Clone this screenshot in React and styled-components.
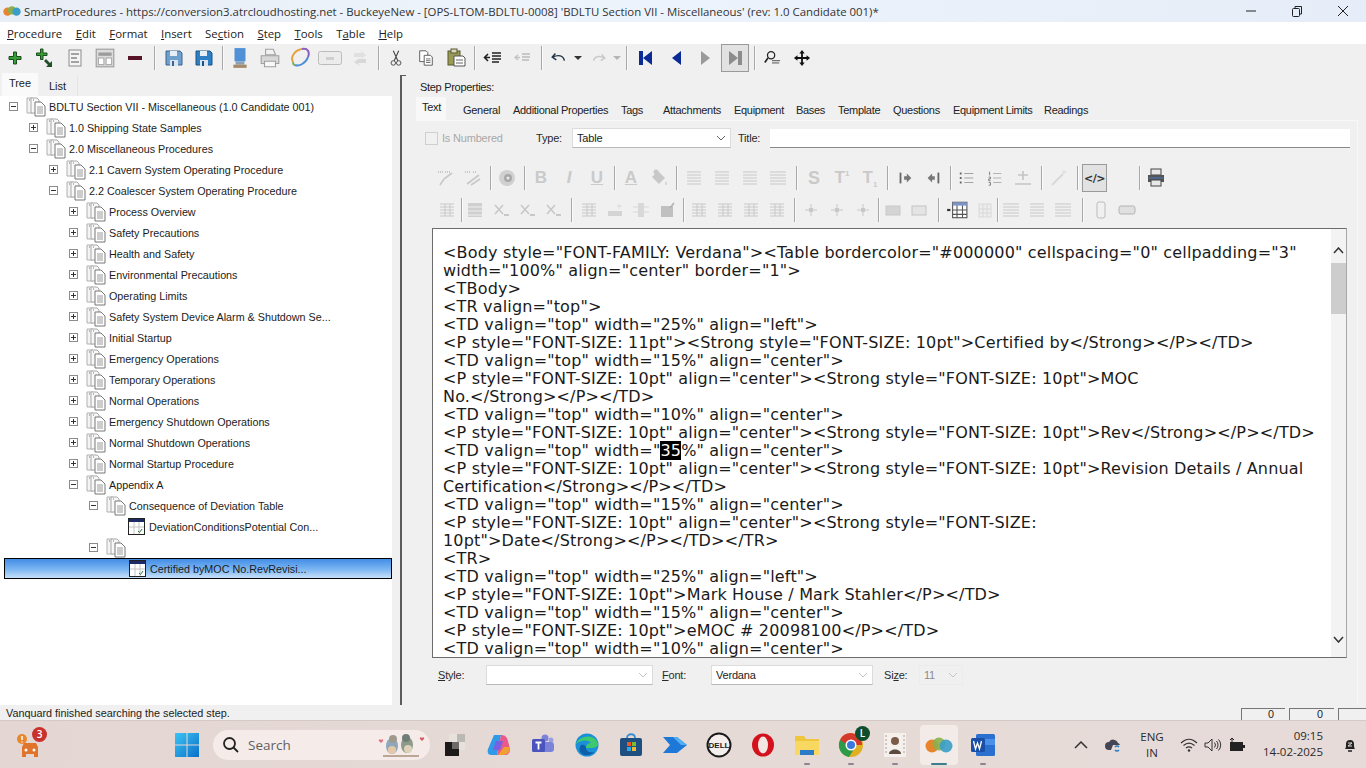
import React from 'react'
import styled, { createGlobalStyle } from 'styled-components'

const GlobalStyle = createGlobalStyle`
    html, body {
        margin: 0;
        padding: 0;
        background: #f0f0f0;
    }
    * {
        box-sizing: border-box;
    }
`

const Screen = styled.div`
    width: 1366px;
    height: 768px;
    overflow: hidden;
    display: flex;
    flex-direction: column;
    font-family: "Open Sans", "Liberation Sans", sans-serif;
    color: #222;
`

const TitleBar = styled.div`
    height: 22px;
    flex: none;
    display: flex;
    align-items: center;
    background: linear-gradient(90deg, #e9eef6, #eef4fc 40%, #e6edf8);
    padding-left: 3px;
    font-size: 11.4px;
    color: #333;
`

const TitleText = styled.span`
    margin-left: 3px;
    flex: 1;
    white-space: nowrap;
`

const WinButton = styled.div`
    width: 46px;
    height: 22px;
    display: flex;
    align-items: center;
    justify-content: center;
`

const MenuBar = styled.div`
    height: 22px;
    flex: none;
    display: flex;
    align-items: center;
    gap: 13.4px;
    padding-left: 7px;
    background: #fff;
    font-size: 11.4px;
    color: #222;
    u {
        text-underline-offset: 1px;
    }
`

const MainToolbar = styled.div`
    height: 28px;
    flex: none;
    display: flex;
    align-items: center;
    background: #f0f0f0;
`

const Slot = styled.div`
    width: ${p => p.$w}px;
    height: ${p => p.$h || 24}px;
    flex: none;
    display: flex;
    align-items: center;
    justify-content: center;
    color: ${p => (p.$off ? '#c8c8c8' : '#3a3a3a')};
    ${p => p.$boxed && `
        background: #e2e2e2;
        border: 1px solid #9a9a9a;
    `}
`

const Sep = styled.div`
    width: ${p => p.$w}px;
    flex: none;
    height: 24px;
    display: flex;
    justify-content: center;
    &::after {
        content: '';
        width: 1px;
        height: 100%;
        background: #a8a8a8;
        box-shadow: 1px 0 0 #fafafa;
    }
`

const Body = styled.div`
    flex: 1;
    min-height: 0;
    display: flex;
`

const LeftPanel = styled.div`
    width: 396px;
    flex: none;
    display: flex;
    flex-direction: column;
`

const TreeTabs = styled.div`
    height: 24px;
    flex: none;
    display: flex;
    align-items: flex-end;
    padding-left: 2px;
`

const TreeTab = styled.div`
    width: ${p => (p.$on ? 36 : 40)}px;
    height: ${p => (p.$on ? 23 : 20)}px;
    display: flex;
    align-items: center;
    justify-content: center;
    font-family: "Liberation Sans", sans-serif;
    font-size: 11px;
    color: #222;
    background: ${p => (p.$on ? '#fafafa' : '#f0f0f0')};
    ${p => !p.$on && 'border-right: 1px solid #e4e4e4;'}
    ${p => p.$on && 'padding-bottom: 3px;'}
`

const Tree = styled.div`
    flex: 1;
    width: 392px;
    background: #fff;
`

const TreeRow = styled.div`
    height: 21px;
    display: flex;
    align-items: center;
    padding-left: ${p => 9 + p.$depth * 20}px;
    margin-left: ${p => (p.$sel ? 4 : 0)}px;
    font-family: "Liberation Sans", sans-serif;
    font-size: 10.75px;
    color: #1c1c1c;
    white-space: nowrap;
    ${p => p.$sel && `
        padding-left: ${6 + p.$depth * 20}px;
        background: linear-gradient(180deg, #3d8ae6, #7db6f2 55%, #cfe5fb);
        outline: 1px solid #000;
        outline-offset: -1px;
    `}
`

const Expander = styled.span`
    width: 9px;
    height: 9px;
    flex: none;
    display: flex;
    align-items: center;
    justify-content: center;
    position: relative;
    ${p => p.$kind && 'border: 1px solid #8c8c8c; background: #fff;'}
    &::before {
        content: '';
        display: ${p => (p.$kind ? 'block' : 'none')};
        width: 5px;
        height: 1px;
        background: #333;
    }
    &::after {
        content: '';
        display: ${p => (p.$kind === 'plus' ? 'block' : 'none')};
        position: absolute;
        width: 1px;
        height: 5px;
        left: 3px;
        top: 1px;
        background: #333;
    }
`

const TreeIcon = styled.span`
    width: 20px;
    height: 20px;
    margin: 0 3px 0 8px;
    flex: none;
    display: flex;
    align-items: center;
    justify-content: center;
`

const Splitter = styled.div`
    width: 8px;
    flex: none;
    padding: 3px 0 0 4px;
    &::before {
        content: '';
        display: block;
        width: 6px;
        height: 1px;
        background: #5c5c5c;
    }
    &::after {
        content: '';
        display: block;
        width: 2px;
        height: calc(100% - 1px);
        background: #5c5c5c;
    }
`

const RightPanel = styled.div`
    flex: 1;
    min-width: 0;
    padding: 8px 8px 0 11px;
    display: flex;
    flex-direction: column;
`

const PanelLabel = styled.div`
    height: 14px;
    line-height: 14px;
    font-family: "Liberation Sans", sans-serif;
    font-size: 11px;
    letter-spacing: -.3px;
    margin: 0 0 5px 5px;
`

const TabRow = styled.div`
    height: 21px;
    flex: none;
    display: flex;
    align-items: flex-end;
    padding-left: 1px;
`

const Tab = styled.div`
    width: ${p => p.$w}px;
    height: ${p => (p.$on ? 23 : 20)}px;
    margin-left: ${p => p.$ml || 0}px;
    flex: none;
    display: flex;
    align-items: center;
    font-family: "Liberation Sans", sans-serif;
    font-size: 11px;
    letter-spacing: -.3px;
    white-space: nowrap;
    color: #222;
    ${p => p.$on && 'background: #f8f8f8; padding: 0 0 4px 6px; margin-top: -2px;'}
`

const TabBody = styled.div`
    flex: 1;
    padding: 7px 7px 0 10px;
    border-top: 1px solid #f8f8f8;
    border-right: 1px solid #f8f8f8;
`

const PropRow = styled.div`
    height: 20px;
    display: flex;
    align-items: center;
    font-family: "Liberation Sans", sans-serif;
    font-size: 11px;
    letter-spacing: -.2px;
    color: #222;
`

const CheckBox = styled.span`
    width: 13px;
    height: 13px;
    border: 1px solid #cfcfcf;
    background: #f0f0f0;
    flex: none;
`

const FieldLabel = styled.span`
    width: ${p => p.$w}px;
    margin-left: ${p => p.$ml || 0}px;
    flex: none;
    color: ${p => (p.$off ? '#a8a8a8' : '#2a2a2a')};
    white-space: nowrap;
    u {
        text-underline-offset: 1px;
    }
`

const Select = styled.div`
    width: ${p => p.$w}px;
    height: 20px;
    flex: none;
    display: flex;
    align-items: center;
    justify-content: space-between;
    padding: 0 4px 0 4px;
    background: ${p => (p.$off ? '#f0f0f0' : '#fff')};
    border: 1px solid ${p => (p.$off ? '#ececec' : '#dcdcdc')};
    border-bottom-color: ${p => (p.$off ? '#ececec' : '#b8b8b8')};
    color: ${p => (p.$off ? '#8a8a8a' : '#222')};
`

const TitleInput = styled.div`
    flex: 1;
    height: 19px;
    margin-left: 6px;
    background: #fff;
    border-bottom: 1px solid #8a8a8a;
`

const FormatRow = styled.div`
    height: 28px;
    display: flex;
    align-items: center;
    margin-top: ${p => p.$mt}px;
    padding-left: ${p => p.$pl}px;
`

const Letter = styled.span`
    font-family: "Liberation Sans", sans-serif;
    font-size: ${p => p.$size || 17}px;
    font-weight: 700;
    font-style: ${p => (p.$italic ? 'italic' : 'normal')};
    text-decoration: ${p => (p.$under ? 'underline' : 'none')};
    color: #cacaca;
    sup, sub {
        font-size: 8px;
        line-height: 0;
    }
`

const CodeTag = styled.span`
    font-family: "DejaVu Sans", sans-serif;
    font-size: 11px;
    font-weight: 700;
    color: #333;
    letter-spacing: -.5px;
`

const Editor = styled.div`
    height: 430px;
    margin: 4px 3px 0 7px;
    display: flex;
    background: #fff;
    border: 1px solid #6c6c6c;
    border-right-color: #a8a8a8;
    overflow: hidden;
`

const CodeArea = styled.div`
    flex: 1;
    min-width: 0;
    overflow: hidden;
    padding: 15px 0 0 10px;
    font-family: "DejaVu Sans", Verdana, sans-serif;
    font-size: 16px;
    letter-spacing: .17px;
    line-height: 18px;
    color: #1a1a1a;
    white-space: pre;
`

const Hilite = styled.span`
    background: #000;
    color: #fff;
`

const ScrollBar = styled.div`
    width: 15px;
    flex: none;
    display: flex;
    flex-direction: column;
    align-items: center;
    background: #f3f3f3;
`

const ScrollButton = styled.div`
    height: 34px;
    width: 100%;
    flex: ${p => (p.$end ? 1 : 'none')};
    display: flex;
    align-items: ${p => (p.$end ? 'flex-end' : 'center')};
    justify-content: center;
    padding: ${p => (p.$end ? '0 0 14px' : '8px 0 0')};
`

const ScrollThumb = styled.div`
    width: 100%;
    height: 51px;
    flex: none;
    background: #cdcdcd;
`

const BottomRow = styled(PropRow)`
    margin-top: 7px;
    padding-left: 13px;
`

const StatusBar = styled.div`
    height: 15px;
    flex: none;
    display: flex;
    align-items: flex-start;
    overflow: hidden;
    font-family: "Liberation Sans", sans-serif;
    font-size: 10.8px;
    color: #1c1c1c;
`

const StatusText = styled.div`
    flex: 1;
    padding-left: 6px;
    line-height: 16px;
`

const StatusPane = styled.div`
    width: ${p => p.$w}px;
    height: 12px;
    margin: 3px 4px 0 0;
    padding-right: 11px;
    flex: none;
    border-left: 1px solid #777;
    border-top: 1px solid #777;
    text-align: right;
    line-height: 10px;
    overflow: hidden;
    &:last-child {
        margin-right: 0;
    }
`

const Taskbar = styled.div`
    height: 48px;
    flex: none;
    display: flex;
    align-items: center;
    background: linear-gradient(90deg, #e4d7d3, #e6dad6 50%, #e6dbd9);
    border-top: 1px solid #d4c9c6;
    padding-left: 8px;
`

const TaskSlot = styled.div`
    width: ${p => (p.$active ? 38 : 44)}px;
    margin: 0 ${p => (p.$active ? 3 : 0)}px;
    height: 40px;
    flex: none;
    display: flex;
    align-items: center;
    justify-content: center;
    position: relative;
    border-radius: 4px;
    ${p => p.$active && 'background: #f2ebe8;'}
    ${p => p.$run && `
        &::after {
            content: '';
            position: absolute;
            bottom: 0;
            left: ${p.$active ? 11 : 19}px;
            width: ${p.$active ? 16 : 6}px;
            height: 2px;
            border-radius: 1px;
            background: ${p.$active ? '#3d7f8f' : '#8d8592'};
        }
    `}
`

const Badge = styled.span`
    position: absolute;
    top: ${p => p.$top}px;
    right: ${p => p.$right}px;
    width: 15px;
    height: 15px;
    border-radius: 50%;
    display: flex;
    align-items: center;
    justify-content: center;
    background: ${p => p.$bg};
    color: #fff;
    font-size: 10px;
    font-weight: 600;
`

const LeftGap = styled.div`
    width: 113px;
    flex: none;
`

const SearchPill = styled.div`
    width: 217px;
    height: 30px;
    margin: 0 3px 0 4px;
    flex: none;
    display: flex;
    align-items: center;
    padding: 0 2px 0 9px;
    border-radius: 15px;
    background: #f5ece9;
    font-size: 13.5px;
    color: #5f5f5f;
`

const SearchLabel = styled.span`
    flex: 1;
    margin-left: 8px;
`

const Tray = styled.div`
    margin-left: auto;
    display: flex;
    align-items: center;
    padding-right: 4px;
    color: #2a2a2a;
`

const TrayIcon = styled.div`
    width: 24px;
    height: 24px;
    flex: none;
    margin-right: ${p => p.$mr || 0}px;
    display: flex;
    align-items: center;
    justify-content: center;
`

const LangBlock = styled.div`
    width: 40px;
    margin-right: 5px;
    flex: none;
    text-align: center;
    font-size: 11.5px;
    line-height: 16px;
`

const Clock = styled.div`
    margin: -2px 15px 0 14px;
    text-align: right;
    font-size: 11.5px;
    line-height: 16px;
    white-space: nowrap;
`

const Svg = ({ s = 20, children }) => <svg width={s} height={s} viewBox="0 0 20 20" fill="none">{children}</svg>

const gLines = (x, y, w, n, step = 3) => Array.from({ length: n }, (_, i) => <path key={i} d={`M${x} ${y + i * step}h${w}`} stroke="currentColor" />)

const Floppy = ({ c, d }) => <Svg>
    <path d="M2 3h14l2 2v12H2z" fill={c} stroke={d} />
    <rect x="6" y="3" width="7" height="5" fill="#e8eef6" />
    <path d="M6 18v-6h8v6" fill="#dbe5f2" />
    <rect x="8" y="13" width="2" height="5" fill={d} />
</Svg>

const Arrow = ({ c, dir, bar }) => <Svg>
    {bar === 'l' && <rect x="3" y="3" width="4" height="14" fill={c} />}
    {bar === 'r' && <rect x="13" y="3" width="4" height="14" fill={c} />}
    {dir === 'l' ? <path d="M15 3v14l-9-7z" fill={c} transform={bar ? 'translate(1 0)' : ''} /> : <path d="M5 3v14l9-7z" fill={c} transform={bar ? 'translate(-1 0)' : ''} />}
</Svg>

const icons = {
    plus: <Svg><path d="M8.500 4h3v4.500H16v3h-4.500V16h-3v-4.500H4v-3h4.500z" fill="#35a035" stroke="#1d4d1d" /></Svg>,
    plusDown: <Svg><path d="M5.500 1h2.500v4h4v2.500H8v4H5.500v-4h-4V5h4z" fill="#35a035" stroke="#1d4d1d" /><path d="M11 11l4 4 2-2v6h-6l2-2-4-4z" fill="#23502a" /></Svg>,
    list: <Svg><rect x="4" y="2" width="12" height="16" fill="#f4f4f4" stroke="#8c8c8c" /><path d="M6 6h8M6 10h6M6 14h8" stroke="#888" strokeWidth="1.400" /></Svg>,
    tpl: <Svg s={22}><rect x="2" y="2" width="16" height="16" fill="#dcdcdc" stroke="#9c9c9c" /><rect x="4" y="5" width="12" height="3" fill="#9c9c9c" /><rect x="4" y="10" width="5" height="6" fill="#fff" stroke="#aaa" /><rect x="11" y="10" width="5" height="6" fill="#fff" stroke="#aaa" /></Svg>,
    minus: <Svg><rect x="3" y="8" width="14" height="4" fill="#5a1428" /></Svg>,
    saveAll: <Floppy c="#6f9fcb" d="#3c668f" />,
    save: <Floppy c="#2f7fc4" d="#1c5384" />,
    monitor: <Svg s={22}><rect x="5" y="1" width="10" height="12" fill="#4f90d6" /><rect x="6" y="13" width="8" height="3" fill="#8aa0b5" /><rect x="4" y="16" width="12" height="3" fill="#a58b6b" /></Svg>,
    printer: <Svg s={22}><path d="M6 2h7l2 5H6z" fill="#f2f2f2" stroke="#a0a0a0" /><path d="M2 8h16v7H2z" fill="#d8d8d8" stroke="#a0a0a0" /><path d="M5 13h10v5H5z" fill="#f8f8f8" stroke="#a0a0a0" /></Svg>,
    ring: <svg width="24" height="24" viewBox="0 0 24 24" fill="none"><path d="M5 16C2 11 7 4 14 3" stroke="#e6a040" strokeWidth="2" /><path d="M14 3c6-1 8 3 6 8" stroke="#8a5cc4" strokeWidth="2" /><path d="M20 11c-2 6-9 10-13 8" stroke="#4d8fd8" strokeWidth="2" /><path d="M7 19c-1 0-2-1-2-3" stroke="#7ab26a" strokeWidth="2" /></svg>,
    pill: <svg width="26" height="20" viewBox="0 0 26 20" fill="none"><rect x="1.500" y="3.500" width="23" height="13" rx="2" fill="#ececec" stroke="#bcbcbc" /><rect x="9" y="9" width="8" height="3" fill="#cfcfcf" /></svg>,
    swap: <Svg><path d="M4 5h8l-2-3 6 5-6 5 2-3H4z" fill="#e0e0e0" /><path d="M16 11H8l2-1-6 4 6 4-2-3h8z" fill="#d8d8d8" /></Svg>,
    cut: <Svg s={18}><path d="M7 2l5 11M13 2L8 13" stroke="#444" strokeWidth="1.200" /><circle cx="7" cy="15.500" r="2.500" stroke="#444" /><circle cx="13" cy="15.500" r="2.500" stroke="#444" /></Svg>,
    copy: <Svg s={18}><path d="M3 2h7l2 2v10H3z" fill="#fff" stroke="#555" /><path d="M8 7h7l2 2v9H8z" fill="#fff" stroke="#555" /><path d="M10 11h5M10 13h5M10 15h5" stroke="#666" /></Svg>,
    paste: <Svg s={20}><rect x="2" y="3" width="12" height="14" fill="#9a9a55" stroke="#56562e" /><rect x="5" y="1" width="6" height="4" fill="#d8d8c0" stroke="#56562e" /><path d="M8 8h9l2 2v8H8z" fill="#fff" stroke="#555" /><path d="M10 12h7M10 15h7" stroke="#666" /></Svg>,
    indent: <Svg><path d="M9 5h9M9 8h9M9 11h9M9 14h7" stroke="#222" strokeWidth="1.400" /><path d="M7 9.500H2M5 6L1.500 9.500 5 13" stroke="#222" strokeWidth="1.600" /></Svg>,
    outdent: <Svg><path d="M9 6h8M9 9h8M9 12h7" stroke="#bbb" strokeWidth="1.400" /><path d="M7 9.500H2M5 7L2 9.500 5 12" stroke="#c4c4c4" strokeWidth="1.400" /></Svg>,
    undo: <Svg s={18}><path d="M6 5L2.500 9 7 12M3 9c6-3 12-2 13 4" stroke="#234" strokeWidth="1.600" /></Svg>,
    redo: <Svg s={18}><path d="M14 6l3.500 4-4.500 3M17 10c-5-3-11-2-12 3" stroke="#c8c8c8" strokeWidth="1.600" /></Svg>,
    drop: <svg width="8" height="5" viewBox="0 0 8 5"><path d="M0 0h8L4 4z" fill="#333" /></svg>,
    dropOff: <svg width="8" height="5" viewBox="0 0 8 5"><path d="M0 0h8L4 4z" fill="#b5b5b5" /></svg>,
    first: <Arrow c="#0a2a96" dir="l" bar="l" />,
    prev: <Arrow c="#0a2a96" dir="l" />,
    next: <Arrow c="#9a9a9a" dir="r" />,
    last: <Arrow c="#8c8c8c" dir="r" bar="r" />,
    find: <Svg s={18}><circle cx="9" cy="7" r="4" stroke="#222" strokeWidth="1.400" /><path d="M5.500 10L2 15" stroke="#222" strokeWidth="1.800" /><path d="M10 13h9M10 15.500h8" stroke="#444" /></Svg>,
    move: <Svg s={18}><path d="M10 1l3 4h-2v4h4V7l4 3-4 3v-2h-4v4h2l-3 4-3-4h2v-4H5v2l-4-3 4-3v2h4V5H7z" fill="#111" /></Svg>,
    spell: <Svg><path d="M3 4h5M10 4h5" stroke="currentColor" strokeDasharray="1 1" strokeWidth="2" /><path d="M5 17l4-6M9 11l8-6" stroke="currentColor" strokeWidth="1.600" /></Svg>,
    spell2: <Svg><path d="M2 4h6M10 4h4" stroke="currentColor" strokeDasharray="1 1" strokeWidth="2" /><path d="M4 16L16 7M8 17l9-6" stroke="currentColor" strokeWidth="1.600" /></Svg>,
    image: <Svg><circle cx="10" cy="10" r="8" fill="#d0d0d0" /><circle cx="11" cy="10" r="4" fill="#a8a8a8" /><circle cx="11" cy="10" r="1.500" fill="#e8e8e8" /></Svg>,
    fill: <Svg><path d="M9 3l7 7-6 6-7-7z" fill="#c8c8c8" /><circle cx="7" cy="4" r="2.500" fill="#c8c8c8" /><path d="M17 13c1 2 1 4 0 4s-1-2 0-4z" fill="#c8c8c8" /></Svg>,
    alignL: <Svg>{gLines(3, 4, 14, 5)}</Svg>,
    alignJ: <Svg>{gLines(2, 4, 16, 5)}</Svg>,
    outIn: <Svg s={18}><path d="M5 4v12" stroke="#666" strokeWidth="2" /><path d="M9 8h3V5l5 5-5 5v-3H9z" fill="#777" /></Svg>,
    inOut: <Svg s={18}><path d="M16 4v12" stroke="#666" strokeWidth="2" /><path d="M12 8H9V5l-5 5 5 5v-3h3z" fill="#777" /></Svg>,
    bullets: <Svg s={18}><path d="M7 5h10M7 10h10M7 15h10" stroke="#999" /><path d="M3 4v2M3 9v2M3 14v2" stroke="#666" strokeWidth="2" /></Svg>,
    numbers: <Svg s={18}><path d="M8 5h9M8 10h9M8 15h9" stroke="#aaa" /><path d="M4 3v4M3 9h2v2H3v2h2M3 15h2v3H3" stroke="#777" /></Svg>,
    plusMinus: <Svg><path d="M10 3v9M5 7h10M2 16h16" stroke="#c4c4c4" strokeWidth="1.600" /></Svg>,
    wand: <Svg><path d="M3 17L14 6" stroke="#d8d8d8" strokeWidth="1.800" /><path d="M15 2v4M13 4h5" stroke="#dcdcdc" /></Svg>,
    print2: <Svg><rect x="5" y="1" width="10" height="6" fill="#e8e8e8" stroke="#444" /><rect x="2" y="7" width="16" height="7" fill="#555" /><rect x="5" y="12" width="10" height="6" fill="#e8e8e8" stroke="#444" /><path d="M3 10h14" stroke="#4a78c8" /></Svg>,
    grid: <Svg>{gLines(3, 4, 14, 5)}<path d="M8 4v12M13 4v12" stroke="currentColor" /></Svg>,
    gridHead: <Svg><rect x="3" y="3" width="14" height="14" fill="#cfcfcf" /><path d="M3 7h14M3 11h14M3 15h14" stroke="#efefef" /></Svg>,
    cross: <Svg><path d="M4 5l8 9M12 5l-8 9" stroke="currentColor" strokeWidth="1.600" /><path d="M13 15h5" stroke="currentColor" strokeWidth="2" /></Svg>,
    merge: <Svg><rect x="3" y="11" width="14" height="5" fill="#d4d4d4" /><path d="M14 4v5M12 6h5" stroke="#dadada" /></Svg>,
    cell: <Svg><rect x="4" y="6" width="12" height="11" fill="#c0c0c0" /><path d="M13 8l4-5" stroke="#b0b0b0" strokeWidth="1.500" /></Svg>,
    colBar: <Svg><rect x="7" y="3" width="6" height="14" fill="#d8d8d8" /><path d="M2 7h16M2 12h16" stroke="#d8d8d8" /></Svg>,
    tick: <Svg><path d="M10 4v12M4 10h12" stroke="currentColor" /><rect x="8" y="8" width="4" height="4" fill="currentColor" /></Svg>,
    band: <Svg><rect x="3" y="6" width="14" height="9" fill="#d4d4d4" stroke="#c8c8c8" /></Svg>,
    band2: <Svg><rect x="3" y="6" width="14" height="9" fill="#e4e4e4" stroke="#c4c4c4" /></Svg>,
    addTable: <Svg s={22}><rect x="6" y="3" width="13" height="14" fill="#fff" stroke="#555" /><rect x="6" y="3" width="13" height="3" fill="#7c93c8" /><path d="M10 6v11M15 6v11M6 10h13M6 14h13" stroke="#555" /><path d="M1 10h3" stroke="#333" strokeWidth="2" /></Svg>,
    addTableOff: <Svg><rect x="6" y="4" width="12" height="13" fill="#ededed" stroke="#d8d8d8" /><path d="M10 4v13M14 4v13M6 9h12M6 13h12" stroke="#d8d8d8" /></Svg>,
    tall: <Svg><rect x="6" y="2" width="8" height="16" rx="2" stroke="#bcbcbc" fill="#f0f0f0" /></Svg>,
    wide: <Svg><rect x="2" y="6" width="16" height="8" rx="2" stroke="#b4b4b4" fill="#e0e0e0" /></Svg>,
}

const mainItems = [
    ['plus'], ['plusDown'], ['list'], ['tpl'], ['minus'], 9, ['saveAll'], ['save'], 6,
    ['monitor'], ['printer'], ['ring'], ['pill'], ['swap'], 6, ['cut'], ['copy'], ['paste'], 7,
    ['indent'], ['outdent'], 6, ['undo'], ['drop', 8], ['blank', 1], ['redo'], ['dropOff', 8], 10,
    ['first'], ['prev'], ['next'], ['last', 28, true], ['blank', 2], 6, ['find'], ['move'],
]

const letter = (text, props) => <Letter {...props}>{text}</Letter>

const formatOne = [
    ['spell'], ['spell2'], 6, ['image'], 6,
    [letter('B')], [letter('I', { $italic: true })], [letter('U', { $under: true })], 6,
    [letter('A', { $under: true })], ['fill'], 7,
    ['alignL'], ['alignL'], ['alignL'], ['alignJ'], 8,
    [letter('S', { $size: 18 })], [letter(<>T<sup>1</sup></>)], [letter(<>T<sub>1</sub></>)], 7,
    ['outIn'], ['inOut'], 6, ['bullets'], ['numbers'], ['plusMinus'], 8, ['wand'], 9,
    [<CodeTag>&lt;/&gt;</CodeTag>, 25, true], ['blank', 29], 6, ['print2'],
]

const formatTwo = [
    ['grid'], 2, ['gridHead'], ['cross'], ['cross'], ['cross'], 10, ['grid'], ['merge'], ['colBar'], ['cell'], 6,
    ['grid'], ['grid'], ['grid'], ['grid'], 8, ['tick'], ['tick'], ['tick'], 4, ['band'], ['band2'], 12,
    ['addTable'], ['addTableOff'], 2, ['alignJ'], ['alignL'], ['alignJ'], 12, ['tall'], ['wide'],
]

const renderItems = (items, slot, off) => items.map((item, i) => {
    if (typeof item === 'number') return <Sep key={i} $w={item} />
    const [name, w, boxed] = item
    const content = typeof name === 'string' ? icons[name] : name
    return <Slot key={i} $w={w || slot} $boxed={boxed} $off={off && name !== 'print2'} $h={boxed ? 28 : 24}>{content}</Slot>
})

const menus = [
    ['', 'P', 'rocedure'], ['', 'E', 'dit'], ['', 'F', 'ormat'], ['', 'I', 'nsert'], ['Se', 'c', 'tion'],
    ['', 'S', 'tep'], ['', 'T', 'ools'], ['T', 'a', 'ble'], ['', 'H', 'elp'],
]

const DocIcon = () => <svg width="20" height="20" viewBox="0 0 20 20" fill="none">
    <path d="M1 1h6v15H1z" fill="#f4f4f4" stroke="#b0b0b0" />
    <path d="M5 1h6l2 2v13H5z" fill="#f8f8f8" stroke="#a8a8a8" />
    <path d="M9 5h6l4 4v10H9z" fill="#fff" stroke="#777" />
    <path d="M11 10h6M11 12h6M11 14h6M11 16h6" stroke="#9a9a9a" />
    <path d="M3 3h1M7 3h1" stroke="#5a7cb8" />
</svg>

const TableIcon = () => <svg width="17" height="17" viewBox="0 0 17 17" fill="none">
    <rect x=".5" y=".5" width="16" height="16" fill="#fff" stroke="#222" />
    <rect x="1" y="1" width="15" height="3" fill="#1d2a66" />
    <path d="M1 9h15M6 4v12M11 4v12" stroke="#c4c4c4" />
    <path d="M10 13l1.500 1.500L14 11" stroke="#2c7a3c" />
</svg>

const rows = [
    ['BDLTU Section VII - Miscellaneous (1.0 Candidate 001)', 0, 'minus'],
    ['1.0 Shipping State Samples', 1, 'plus'],
    ['2.0 Miscellaneous Procedures', 1, 'minus'],
    ['2.1 Cavern System Operating Procedure', 2, 'plus'],
    ['2.2 Coalescer System Operating Procedure', 2, 'minus'],
    ['Process Overview', 3, 'plus'],
    ['Safety Precautions', 3, 'plus'],
    ['Health and Safety', 3, 'plus'],
    ['Environmental Precautions', 3, 'plus'],
    ['Operating Limits', 3, 'plus'],
    ['Safety System Device Alarm & Shutdown Se...', 3, 'plus'],
    ['Initial Startup', 3, 'plus'],
    ['Emergency Operations', 3, 'plus'],
    ['Temporary Operations', 3, 'plus'],
    ['Normal Operations', 3, 'plus'],
    ['Emergency Shutdown Operations', 3, 'plus'],
    ['Normal Shutdown Operations', 3, 'plus'],
    ['Normal Startup Procedure', 3, 'plus'],
    ['Appendix A', 3, 'minus'],
    ['Consequence of Deviation Table', 4, 'minus'],
    ['DeviationConditionsPotential Con...', 5, null],
    ['', 4, 'minus'],
    ['Certified byMOC No.RevRevisi...', 5, null, true],
]

const tabs = [
    ['Text', 30, true, 0], ['General', 50, false, 17], ['Additional Properties', 108], ['Tags', 42], ['Attachments', 71],
    ['Equipment', 62], ['Bases', 42], ['Template', 55], ['Questions', 60], ['Equipment Limits', 91], ['Readings', 60],
]

const Chev = ({ off }) => <svg width="10" height="6" viewBox="0 0 10 6" fill="none"><path d="M1 1l4 4 4-4" stroke={off ? '#c4c4c4' : '#666'} /></svg>

const codeLines = [
    '<Body style="FONT-FAMILY: Verdana"><Table bordercolor="#000000" cellspacing="0" cellpadding="3"',
    'width="100%" align="center" border="1">',
    '<TBody>',
    '<TR valign="top">',
    '<TD valign="top" width="25%" align="left">',
    '<P style="FONT-SIZE: 11pt"><Strong style="FONT-SIZE: 10pt">Certified by</Strong></P></TD>',
    '<TD valign="top" width="15%" align="center">',
    '<P style="FONT-SIZE: 10pt" align="center"><Strong style="FONT-SIZE: 10pt">MOC',
    'No.</Strong></P></TD>',
    '<TD valign="top" width="10%" align="center">',
    '<P style="FONT-SIZE: 10pt" align="center"><Strong style="FONT-SIZE: 10pt">Rev</Strong></P></TD>',
    <>{'<TD valign="top" width="'}<Hilite>35</Hilite>{'%" align="center">'}</>,
    '<P style="FONT-SIZE: 10pt" align="center"><Strong style="FONT-SIZE: 10pt">Revision Details / Annual',
    'Certification</Strong></P></TD>',
    '<TD valign="top" width="15%" align="center">',
    '<P style="FONT-SIZE: 10pt" align="center"><Strong style="FONT-SIZE:',
    '10pt">Date</Strong></P></TD></TR>',
    '<TR>',
    '<TD valign="top" width="25%" align="left">',
    '<P style="FONT-SIZE: 10pt">Mark House / Mark Stahler</P></TD>',
    '<TD valign="top" width="15%" align="center">',
    '<P style="FONT-SIZE: 10pt">eMOC # 20098100</P></TD>',
    '<TD valign="top" width="10%" align="center">',
]

const Car = () => <svg width="30" height="30" viewBox="0 0 30 30" fill="none">
    <circle cx="7" cy="9" r="5" fill="#e8862e" />
    <path d="M7 6v4M7 11.500v1" stroke="#fff" strokeWidth="1.500" />
    <path d="M7 17l2-4h12l2 4v7H7z" fill="#e0742a" />
    <rect x="7" y="24" width="4" height="3" fill="#e0742a" />
    <rect x="19" y="24" width="4" height="3" fill="#e0742a" />
    <circle cx="11" cy="20" r="1.500" fill="#fff" /><circle cx="19" cy="20" r="1.500" fill="#fff" />
</svg>

const WinLogo = () => <svg width="24" height="24" viewBox="0 0 24 24">
    <defs><linearGradient id="wl" x1="0" y1="0" x2="1" y2="1"><stop offset="0" stopColor="#3cc4f4" /><stop offset="1" stopColor="#0a6fc8" /></linearGradient></defs>
    <path d="M0 0h11.500v11.500H0zM12.500 0H24v11.500H12.500zM0 12.500h11.500V24H0zM12.500 12.500H24V24H12.500z" fill="url(#wl)" />
</svg>

const Birds = () => <svg width="50" height="26" viewBox="0 0 50 26" fill="none">
    <path d="M3 8c1-2 3 0 2 1L3 11 1 9c-1-1 1-3 2-1z" fill="#e4707c" />
    <path d="M44 6c1-2 3 0 2 1l-2 2-2-2c-1-1 1-3 2-1z" fill="#d85a68" />
    <ellipse cx="14" cy="14" rx="6" ry="8" fill="#8da7bc" />
    <circle cx="15" cy="7" r="4" fill="#a09a8c" />
    <ellipse cx="14" cy="18" rx="4" ry="4" fill="#e5c8a8" />
    <ellipse cx="29" cy="13" rx="6" ry="8" fill="#8c9a8a" />
    <circle cx="28" cy="6" r="4" fill="#6f7d78" />
    <ellipse cx="30" cy="17" rx="4" ry="4" fill="#ded2b8" />
    <path d="M5 24h36" stroke="#a98f78" strokeWidth="1.500" />
</svg>

const task = {
    folder: <svg width="24" height="24" viewBox="0 0 24 24"><rect x="6" y="1" width="16" height="16" fill="#e8e2dc" /><rect x="14" y="1" width="8" height="8" fill="#bcb8b4" /><rect x="2" y="9" width="14" height="14" fill="#1c1a18" /><rect x="9" y="9" width="7" height="7" fill="#6e6a68" /></svg>,
    copilot: <svg width="24" height="24" viewBox="0 0 24 24"><path d="M7 2h7l-4 20H4C1 22 0 19 1 16z" fill="#2f9be8" /><path d="M14 2c4 0 6 2 7 6l2 8c0 4-2 6-5 6h-8z" fill="#e85a8c" /><path d="M9 8h7l-3 9H6z" fill="#7a5fe0" /><path d="M17 14h6c0 5-3 8-7 8h-5z" fill="#f0a030" /></svg>,
    teams: <svg width="24" height="24" viewBox="0 0 24 24"><circle cx="14" cy="5" r="3.500" fill="#7b83d8" /><circle cx="20" cy="7" r="2.500" fill="#9a9fe0" /><rect x="10" y="9" width="13" height="10" rx="3" fill="#7b83d8" /><rect x="1" y="6" width="13" height="13" rx="1.500" fill="#4b53bc" /><path d="M4.500 9.500h6M7.500 9.500v7" stroke="#fff" strokeWidth="1.800" /></svg>,
    edge: <svg width="24" height="24" viewBox="0 0 24 24"><circle cx="12" cy="12" r="11.500" fill="#1b8fd8" /><path d="M1 11C3 3 20-1 23 11c0 3-3 4-7 4h-5c0-3 2-5 5-5-3-4-11-3-15 1z" fill="#3ec870" /><path d="M11 15c0 3 3 5 7 4 1 0 1 1 0 1-4 3-9 3-12 0-2-2-2-5 0-8 2-1 5 0 5 3z" fill="#0d5ea8" /></svg>,
    store: <svg width="24" height="24" viewBox="0 0 24 24"><path d="M8 5c0-5 8-5 8 0" fill="none" stroke="#3a8fd0" strokeWidth="1.800" /><rect x="1" y="5" width="22" height="18" rx="2" fill="#1e4f80" /><rect x="8" y="9" width="4" height="4" fill="#e8582c" /><rect x="13" y="9" width="4" height="4" fill="#7fba2c" /><rect x="8" y="14" width="4" height="4" fill="#2ca8e8" /><rect x="13" y="14" width="4" height="4" fill="#f4b82c" /></svg>,
    flow: <svg width="24" height="24" viewBox="0 0 24 24"><path d="M0 4h14l10 8-10 8H0l7-8z" fill="#1d78d8" /><path d="M14 4l10 8-6 0-8-8z" fill="#52b0f0" /></svg>,
    dell: <svg width="26" height="26" viewBox="0 0 26 26"><circle cx="13" cy="13" r="11.500" fill="#f4efec" stroke="#1a1a1a" strokeWidth="2" /><text x="13" y="16" textAnchor="middle" fontFamily="Liberation Sans" fontSize="8" fontWeight="700" fill="#1a1a1a">DELL</text></svg>,
    opera: <svg width="24" height="24" viewBox="0 0 24 24"><ellipse cx="12" cy="12" rx="11" ry="11.500" fill="#d4121e" /><ellipse cx="12" cy="12" rx="5" ry="8.500" fill="#f3e6e2" /></svg>,
    files: <svg width="26" height="24" viewBox="0 0 26 24"><path d="M1 3h9l2 3h13v16H1z" fill="#f0c63c" /><rect x="1" y="8" width="24" height="14" fill="#f8d860" /><rect x="6" y="17" width="14" height="5" fill="#2a7cc8" /></svg>,
    chrome: <svg width="26" height="26" viewBox="0 0 26 26"><circle cx="13" cy="13" r="12" fill="#e0b020" /><path d="M13 1A12 12 0 0 0 2 8l6 10 5-5h11A12 12 0 0 0 13 1z" fill="#d43a2c" /><path d="M2 8a12 12 0 0 0 9 17l5-8z" fill="#2c9a48" /><circle cx="13" cy="13" r="5.500" fill="#fff" /><circle cx="13" cy="13" r="4" fill="#3a78e0" /></svg>,
    badge: <svg width="24" height="26" viewBox="0 0 24 26"><rect x="1" y="1" width="22" height="24" fill="#f5f0ec" /><circle cx="12" cy="9" r="4" fill="#7a5a48" /><path d="M6 22c0-6 12-6 12 0z" fill="#5a4a40" /><path d="M3 3v20M21 3v20" stroke="#a8a09c" strokeDasharray="2 2" /></svg>,
    smart: <svg width="28" height="20" viewBox="0 0 28 20"><circle cx="7" cy="11" r="6.500" fill="#e8852c" /><circle cx="14" cy="9" r="6.500" fill="#8ab04c" opacity=".9" /><circle cx="21" cy="11" r="6.500" fill="#3a9ec8" opacity=".9" /></svg>,
    word: <svg width="26" height="24" viewBox="0 0 26 24"><rect x="6" y="1" width="19" height="22" rx="1.500" fill="#2b6fd0" /><rect x="6" y="6" width="19" height="6" fill="#4a90e8" /><rect x="1" y="5" width="14" height="14" rx="1.500" fill="#1a4fa8" /><path d="M3.500 8l2 8 2-6 2 6 2-8" stroke="#fff" strokeWidth="1.300" fill="none" /></svg>,
}

const App = () => <Screen>
    <GlobalStyle />
    <TitleBar>
        <svg width="18" height="14" viewBox="0 0 28 20"><circle cx="7" cy="11" r="6.500" fill="#e8852c" /><circle cx="14" cy="9" r="6.500" fill="#8ab04c" /><circle cx="21" cy="11" r="6.500" fill="#3a9ec8" /></svg>
        <TitleText>SmartProcedures - https://conversion3.atrcloudhosting.net - BuckeyeNew - [OPS-LTOM-BDLTU-0008] 'BDLTU Section VII - Miscellaneous' (rev: 1.0 Candidate 001)*</TitleText>
        <WinButton><svg width="12" height="12" viewBox="0 0 12 12"><path d="M1 6h10" stroke="#222" /></svg></WinButton>
        <WinButton><svg width="12" height="12" viewBox="0 0 12 12" fill="none"><rect x="1.500" y="3.500" width="7" height="8" rx="1" stroke="#222" /><path d="M4 3V1.500h6.500V9H9" stroke="#222" /></svg></WinButton>
        <WinButton><svg width="12" height="12" viewBox="0 0 12 12"><path d="M1 1l10 10M11 1L1 11" stroke="#222" /></svg></WinButton>
    </TitleBar>
    <MenuBar>
        {menus.map(([a, b, c]) => <span key={c}>{a}<u>{b}</u>{c}</span>)}
    </MenuBar>
    <MainToolbar>{renderItems(mainItems, 30)}</MainToolbar>
    <Body>
        <LeftPanel>
            <TreeTabs>
                <TreeTab $on>Tree</TreeTab>
                <TreeTab>List</TreeTab>
            </TreeTabs>
            <Tree>
                {rows.map(([label, depth, exp, sel], i) => <TreeRow key={i} $depth={depth} $sel={sel}>
                    <Expander $kind={exp} />
                    <TreeIcon>{exp ? <DocIcon /> : <TableIcon />}</TreeIcon>
                    {label}
                </TreeRow>)}
            </Tree>
        </LeftPanel>
        <Splitter />
        <RightPanel>
            <PanelLabel>Step Properties:</PanelLabel>
            <TabRow>
                {tabs.map(([label, w, on, ml]) => <Tab key={label} $w={w} $on={on} $ml={ml}>{label}</Tab>)}
            </TabRow>
            <TabBody>
                <PropRow>
                    <CheckBox />
                    <FieldLabel $off $w={94} $ml={4}>Is Numbered</FieldLabel>
                    <FieldLabel $w={36}>Type:</FieldLabel>
                    <Select $w={159}>Table<Chev /></Select>
                    <FieldLabel $w={26} $ml={7}>Title:</FieldLabel>
                    <TitleInput />
                </PropRow>
                <FormatRow $mt={16} $pl={6}>{renderItems(formatOne, 28, true)}</FormatRow>
                <FormatRow $mt={4} $pl={9}>{renderItems(formatTwo, 26, true)}</FormatRow>
                <Editor>
                    <CodeArea>
                        {codeLines.map((line, i) => <div key={i}>{line}</div>)}
                    </CodeArea>
                    <ScrollBar>
                        <ScrollButton>
                            <svg width="11" height="7" viewBox="0 0 11 7" fill="none"><path d="M1 6l4.500-5L10 6" stroke="#333" strokeWidth="1.500" /></svg>
                        </ScrollButton>
                        <ScrollThumb />
                        <ScrollButton $end>
                            <svg width="11" height="7" viewBox="0 0 11 7" fill="none"><path d="M1 1l4.500 5L10 1" stroke="#333" strokeWidth="1.500" /></svg>
                        </ScrollButton>
                    </ScrollBar>
                </Editor>
                <BottomRow>
                    <FieldLabel $w={48}><u>S</u>tyle:</FieldLabel>
                    <Select $w={167}><span /><Chev off /></Select>
                    <FieldLabel $w={49} $ml={9}><u>F</u>ont:</FieldLabel>
                    <Select $w={162}>Verdana<Chev off /></Select>
                    <FieldLabel $w={35} $ml={11}>Si<u>z</u>e:</FieldLabel>
                    <Select $w={44} $off>11<Chev off /></Select>
                </BottomRow>
            </TabBody>
        </RightPanel>
    </Body>
    <StatusBar>
        <StatusText>Vanquard finished searching the selected step.</StatusText>
        <StatusPane $w={44}>0</StatusPane>
        <StatusPane $w={45}>0</StatusPane>
        <StatusPane $w={28} />
    </StatusBar>
    <Taskbar>
        <TaskSlot>
            <Car />
            <Badge $top={2} $right={5} $bg="#c8322c">3</Badge>
        </TaskSlot>
        <LeftGap />
        <TaskSlot><WinLogo /></TaskSlot>
        <SearchPill>
            <svg width="18" height="18" viewBox="0 0 18 18" fill="none"><circle cx="7.500" cy="7.500" r="5.500" stroke="#222" strokeWidth="1.800" /><path d="M11.500 11.500L16 16" stroke="#222" strokeWidth="1.800" /></svg>
            <SearchLabel>Search</SearchLabel>
            <Birds />
        </SearchPill>
        <TaskSlot>{task.folder}</TaskSlot>
        <TaskSlot>{task.copilot}</TaskSlot>
        <TaskSlot>{task.teams}</TaskSlot>
        <TaskSlot>{task.edge}</TaskSlot>
        <TaskSlot>{task.store}</TaskSlot>
        <TaskSlot>{task.flow}</TaskSlot>
        <TaskSlot>{task.dell}</TaskSlot>
        <TaskSlot>{task.opera}</TaskSlot>
        <TaskSlot $run>{task.files}</TaskSlot>
        <TaskSlot $run>
            {task.chrome}
            <Badge $top={1} $right={3} $bg="#0f4d2c">L</Badge>
        </TaskSlot>
        <TaskSlot $run>{task.badge}</TaskSlot>
        <TaskSlot $run $active>{task.smart}</TaskSlot>
        <TaskSlot $run>{task.word}</TaskSlot>
        <Tray>
            <TrayIcon $mr={8}><svg width="14" height="8" viewBox="0 0 14 8" fill="none"><path d="M1 7l6-6 6 6" stroke="#333" strokeWidth="1.500" /></svg></TrayIcon>
            <TrayIcon $mr={7}><svg width="18" height="16" viewBox="0 0 18 16" fill="none"><path d="M5 13a4 4 0 0 1 0-8 5 5 0 0 1 9 1 3 3 0 0 1 2 2H9l-2 5z" fill="#445" /><path d="M11 10a2.500 2.500 0 0 1 4 0M15 13a2.500 2.500 0 0 1-4 0" stroke="#2a7cc8" strokeWidth="1.400" /></svg></TrayIcon>
            <LangBlock>ENG<br />IN</LangBlock>
            <TrayIcon><svg width="18" height="14" viewBox="0 0 18 14" fill="none"><path d="M1 5c5-5 11-5 16 0M3.500 7.500c3.500-3 7.500-3 11 0M6 10c2-1.500 4-1.500 6 0" stroke="#333" strokeWidth="1.200" /><circle cx="9" cy="12.500" r="1.200" fill="#333" /></svg></TrayIcon>
            <TrayIcon><svg width="18" height="14" viewBox="0 0 18 14" fill="none"><path d="M1 5h3l4-4v12L4 9H1z" stroke="#333" /><path d="M10.500 4.500a4 4 0 0 1 0 5M12.500 3a6 6 0 0 1 0 8M14.500 1.500a8 8 0 0 1 0 11" stroke="#333" /></svg></TrayIcon>
            <TrayIcon><svg width="18" height="14" viewBox="0 0 18 14"><rect x="2" y="4" width="13" height="9" fill="#222" /><rect x="15" y="7" width="2" height="3" fill="#222" /><path d="M4 0v6M2 2l2-2 2 2" stroke="#222" fill="none" /></svg></TrayIcon>
            <Clock>09:15<br />14-02-2025</Clock>
            <TrayIcon><svg width="14" height="16" viewBox="0 0 14 16" fill="none"><path d="M2 12c1-1 1-3 1-5a4 4 0 0 1 8 0c0 2 0 4 1 5z" fill="#222" /><path d="M5 14h4" stroke="#222" strokeWidth="1.500" /><path d="M5 6h4L5 9h4" stroke="#e6dbd9" /></svg></TrayIcon>
        </Tray>
    </Taskbar>
</Screen>

export default App
